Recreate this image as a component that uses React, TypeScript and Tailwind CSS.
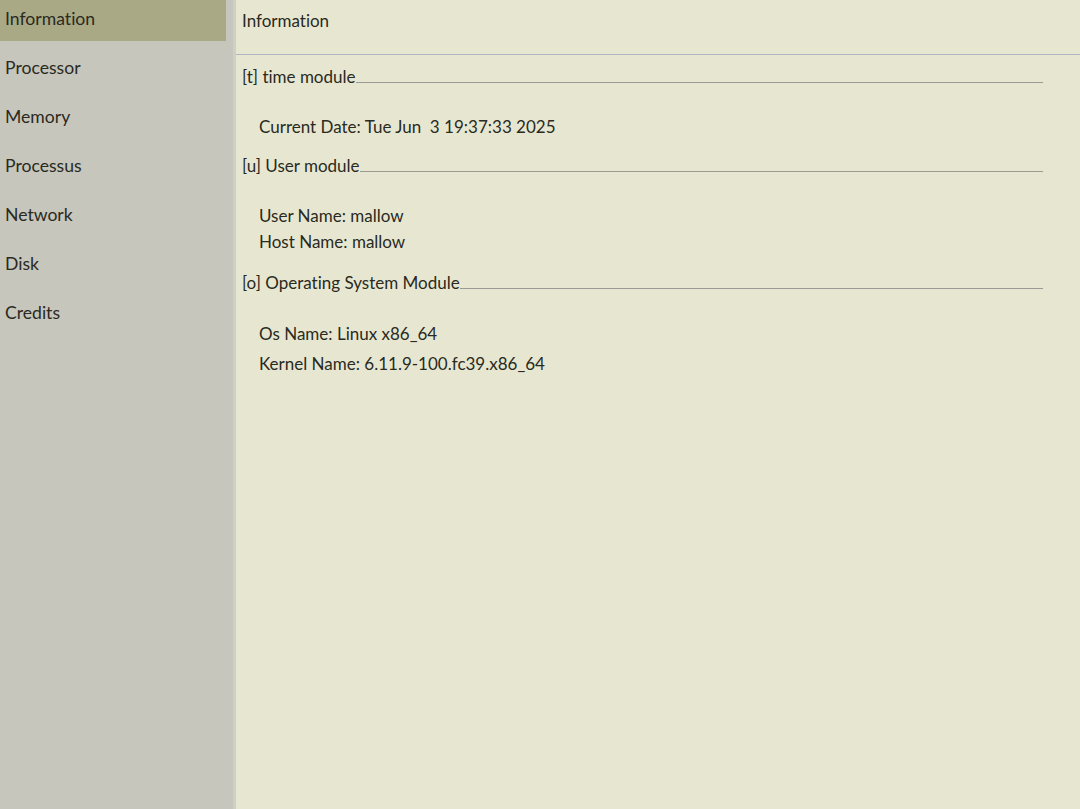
const menu = ["Information", "Processor", "Memory", "Processus", "Network", "Disk", "Credits"];

function Section({ label, top }: { label: string; top: string }) {
  return (
    <div className={`flex items-end ${top} mr-[37px]`}>
      <span className="whitespace-pre">{label}</span>
      <div className="flex-1 h-px bg-[#9a9a96] mb-[4px]" />
    </div>
  );
}

export default function App() {
  return (
    <div
      className="w-[1080px] h-[809px] flex overflow-hidden text-[17px] leading-[20px] text-[#2a2a1e] [font-variant-ligatures:none]"
      style={{ fontFamily: "Lato, 'Noto Sans', sans-serif" }}
    >
      {/* sidebar */}
      <div className="w-[236px] shrink-0 bg-[#c6c6bc] flex text-[17.6px]">
        <ul className="w-[226px] -mt-[8px]">
          {menu.map((m, i) => (
            <li
              key={m}
              className={`h-[49px] flex items-center pl-[5px] ${i === 0 ? "bg-[#a9a986]" : ""}`}
            >
              <span className="mt-[5px]">{m}</span>
            </li>
          ))}
        </ul>
        <div className="flex-1 border-r-[3px] border-[#d0d0c6]" />
      </div>

      {/* main */}
      <div className="flex-1 bg-[#e7e7d1]">
        <div className="h-[55px] border-b border-[#b3b3c6] pl-[6px] pt-[11px]">Information</div>
        <div className="pl-[6px]">
          <Section label="[t] time module" top="mt-[12px]" />
          <div className="pl-[17px] mt-[30px] whitespace-pre">Current Date: Tue Jun  3 19:37:33 2025</div>

          <Section label="[u] User module" top="mt-[19px]" />
          <div className="pl-[17px] mt-[30px]">User Name: mallow</div>
          <div className="pl-[17px] mt-[6px]">Host Name: mallow</div>

          <Section label="[o] Operating System Module" top="mt-[21px]" />
          <div className="pl-[17px] mt-[31px]">Os Name: Linux x86_64</div>
          <div className="pl-[17px] mt-[10px]">Kernel Name: 6.11.9-100.fc39.x86_64</div>
        </div>
      </div>
    </div>
  );
}
